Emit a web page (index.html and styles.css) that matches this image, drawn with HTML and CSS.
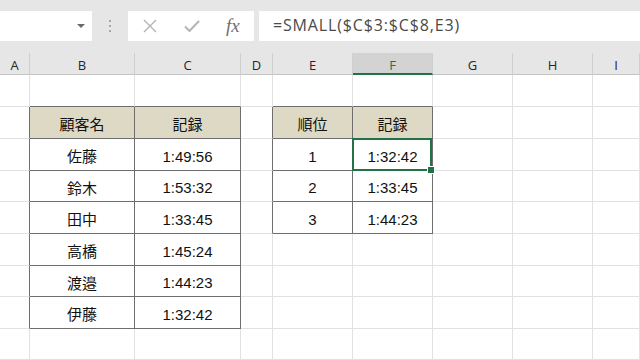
FILE: index.html
```html
<!DOCTYPE html>
<html lang="ja">
<head>
<meta charset="utf-8">
<title>SMALL</title>
<link rel="stylesheet" href="styles.css">
</head>
<body>
<div class="app">
  <div class="toolbar">
    <div class="namebox"><span class="caret"></span></div>
    <div class="grip"><i></i><i></i><i></i></div>
    <div class="fbuttons">
      <svg class="ico" width="14" height="14" viewBox="0 0 14 14"><path d="M1 1L13 13M13 1L1 13" stroke="#b4b4b4" stroke-width="1.4" fill="none"/></svg>
      <svg class="ico" width="16" height="12" viewBox="0 0 16 12"><path d="M1 6.5L5.5 11L15 1" stroke="#b4b4b4" stroke-width="2" fill="none"/></svg>
      <span class="fx">fx</span>
    </div>
    <div class="formula">=SMALL($C$3:$C$8,E3)</div>
  </div>
  <div class="sheet">
    <div class="ch">A</div><div class="ch">B</div><div class="ch">C</div><div class="ch">D</div><div class="ch">E</div><div class="ch active">F</div><div class="ch">G</div><div class="ch">H</div><div class="ch">I</div>

    <div class="c"></div><div class="c bb"></div><div class="c bb"></div><div class="c"></div><div class="c bb"></div><div class="c bb"></div><div class="c"></div><div class="c"></div><div class="c"></div>

    <div class="c br"></div><div class="c tb hd">顧客名</div><div class="c tb hd">記録</div><div class="c br"></div><div class="c tb hd">順位</div><div class="c tb hd">記録</div><div class="c"></div><div class="c"></div><div class="c"></div>

    <div class="c br"></div><div class="c tb">佐藤</div><div class="c tb num">1:49:56</div><div class="c br"></div><div class="c tb num">1</div><div class="c tb num sel">1:32:42</div><div class="c"></div><div class="c"></div><div class="c"></div>

    <div class="c br"></div><div class="c tb">鈴木</div><div class="c tb num">1:53:32</div><div class="c br"></div><div class="c tb num">2</div><div class="c tb num">1:33:45</div><div class="c"></div><div class="c"></div><div class="c"></div>

    <div class="c br"></div><div class="c tb">田中</div><div class="c tb num">1:33:45</div><div class="c br"></div><div class="c tb num">3</div><div class="c tb num">1:44:23</div><div class="c"></div><div class="c"></div><div class="c"></div>

    <div class="c br"></div><div class="c tb">高橋</div><div class="c tb num">1:45:24</div><div class="c"></div><div class="c"></div><div class="c"></div><div class="c"></div><div class="c"></div><div class="c"></div>

    <div class="c br"></div><div class="c tb">渡邉</div><div class="c tb num">1:44:23</div><div class="c"></div><div class="c"></div><div class="c"></div><div class="c"></div><div class="c"></div><div class="c"></div>

    <div class="c br"></div><div class="c tb">伊藤</div><div class="c tb num">1:32:42</div><div class="c"></div><div class="c"></div><div class="c"></div><div class="c"></div><div class="c"></div><div class="c"></div>

    <div class="c"></div><div class="c"></div><div class="c"></div><div class="c"></div><div class="c"></div><div class="c"></div><div class="c"></div><div class="c"></div><div class="c"></div>
  </div>
</div>
</body>
</html>
```
FILE: styles.css
```css
* { box-sizing: border-box; }
html, body { margin: 0; padding: 0; }
body {
  width: 640px;
  height: 360px;
  overflow: hidden;
  background: #ffffff;
  font-family: "Noto Sans", "Noto Sans CJK JP", sans-serif;
}
.app { display: flex; flex-direction: column; width: 640px; height: 360px; }

.toolbar {
  height: 53px;
  flex: none;
  background: #e6e6e6;
  display: flex;
  align-items: flex-start;
  padding-top: 11px;
}
.namebox {
  width: 92px;
  height: 30px;
  background: #fff;
  display: flex;
  align-items: center;
  justify-content: flex-end;
  padding-right: 7px;
}
.caret {
  width: 0; height: 0;
  border-left: 4px solid transparent;
  border-right: 4px solid transparent;
  border-top: 4px solid #6a6a6a;
}
.grip {
  width: 36px;
  height: 30px;
  display: flex;
  flex-direction: column;
  align-items: center;
  justify-content: center;
  gap: 3px;
}
.grip i { display: block; width: 2px; height: 2px; background: #a8a8a8; }
.fbuttons {
  width: 126px;
  height: 30px;
  background: #fff;
  display: flex;
  align-items: center;
  padding-left: 15px;
}
.fbuttons .ico:first-child { margin-right: 27px; }
.fbuttons .ico:nth-child(2) { margin-right: 26px; }
.fx {
  font-family: "Liberation Serif", "DejaVu Serif", serif;
  font-style: italic;
  font-size: 19px;
  color: #707070;
  line-height: 1;
  margin-top: -2px;
}
.formula {
  margin-left: 5px;
  flex: 1;
  height: 30px;
  background: #fff;
  padding-left: 14px;
  font-family: "Open Sans", "Noto Sans", sans-serif;
  font-size: 16px;
  color: #4a4a4a;
  line-height: 29px;
  letter-spacing: 0.85px;
}

.sheet {
  display: grid;
  grid-template-columns: 30px 105px 106px 32px 80px 80px 80px 80px 47px;
  grid-template-rows: 22px 32px 32px 32px 31px 32px 32px 31px 32px 31px;
  width: 640px;
}
.ch {
  background: #e6e6e6;
  border-bottom: 1px solid #c4c4c4;
  border-right: 1px solid #cfcfcf;
  font-family: "Open Sans", "Noto Sans", sans-serif;
  font-size: 13px;
  color: #262626;
  display: flex;
  align-items: center;
  justify-content: center;
  padding-top: 3px;
}
.ch.active {
  background: #d3d3d3;
  color: #217346;
  border-bottom: 2px solid #217346;
  padding-top: 4px;
}
.c {
  border-right: 1px solid #e1e1e1;
  border-bottom: 1px solid #e1e1e1;
  display: flex;
  align-items: center;
  justify-content: center;
  font-family: "Noto Sans CJK JP", sans-serif;
  font-size: 15px;
  color: #111;
  padding-top: 2px;
}
.c.num { font-family: "Liberation Sans", Arial, sans-serif; padding-top: 3px; }
.c.bb { border-bottom-color: #6e6e6e; }
.c.br { border-right-color: #6e6e6e; }
.c.tb { border-right-color: #6e6e6e; border-bottom-color: #6e6e6e; }
.c.hd { background: #ddd9c4; }
.c.sel { position: relative; }
.c.sel::before {
  content: "";
  position: absolute;
  left: -1px; top: -1px; right: 0; bottom: -1px;
  border: 2px solid #217346;
}
.c.sel::after {
  content: "";
  position: absolute;
  right: -3px; bottom: -4px;
  width: 6px; height: 6px;
  background: #217346;
  border: 1px solid #fff;
}
```
